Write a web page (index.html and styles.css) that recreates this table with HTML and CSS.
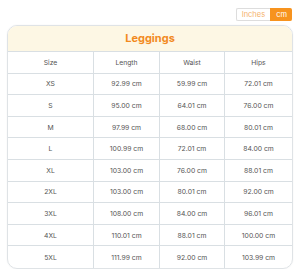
FILE: index.html
```html
<!DOCTYPE html>
<html lang="en">
<head>
    <meta charset="UTF-8">
    <title>Leggings size chart</title>
    <link rel="stylesheet" href="styles.css">
</head>
<body>
    <div class="chart">
        <div class="unit-toggle">
            <span class="unit">Inches</span>
            <span class="unit active">cm</span>
        </div>
        <div class="card">
            <div class="card-title">Leggings</div>
            <div class="grid">
                <div class="cell head">Size</div><div class="cell head">Length</div><div class="cell head">Waist</div><div class="cell head">Hips</div>
                <div class="cell">XS</div><div class="cell">92.99 cm</div><div class="cell">59.99 cm</div><div class="cell">72.01 cm</div>
                <div class="cell">S</div><div class="cell">95.00 cm</div><div class="cell">64.01 cm</div><div class="cell">76.00 cm</div>
                <div class="cell">M</div><div class="cell">97.99 cm</div><div class="cell">68.00 cm</div><div class="cell">80.01 cm</div>
                <div class="cell">L</div><div class="cell">100.99 cm</div><div class="cell">72.01 cm</div><div class="cell">84.00 cm</div>
                <div class="cell">XL</div><div class="cell">103.00 cm</div><div class="cell">76.00 cm</div><div class="cell">88.01 cm</div>
                <div class="cell">2XL</div><div class="cell">103.00 cm</div><div class="cell">80.01 cm</div><div class="cell">92.00 cm</div>
                <div class="cell">3XL</div><div class="cell">108.00 cm</div><div class="cell">84.00 cm</div><div class="cell">96.01 cm</div>
                <div class="cell">4XL</div><div class="cell">110.01 cm</div><div class="cell">88.01 cm</div><div class="cell">100.00 cm</div>
                <div class="cell last">5XL</div><div class="cell last">111.99 cm</div><div class="cell last">92.00 cm</div><div class="cell last">103.99 cm</div>
            </div>
        </div>
    </div>
</body>
</html>
```

FILE: styles.css
```css
* {
    margin: 0;
    padding: 0;
    box-sizing: border-box;
}

body {
    font-family: "Inter", "Open Sans", sans-serif;
    background: #fff;
    color: #555;
}

.chart {
    padding: 8px 7px 0 7px;
}

.unit-toggle {
    display: flex;
    justify-content: flex-end;
    margin-right: 1px;
}

.unit {
    font-size: 7.5px;
    line-height: 11px;
    padding: 0 5px;
    color: #f5b26b;
    border: 1px solid #ddd;
    border-right: none;
    border-radius: 2px 0 0 2px;
    background: #fff;
}

.unit.active {
    color: #fff;
    background: #f7931e;
    border-color: #f7931e;
    border-radius: 0 2px 2px 0;
}

.card {
    margin-top: 4px;
    border: 1px solid #dfe3e6;
    border-radius: 10px;
    overflow: hidden;
    box-shadow: 0 0 2px rgba(0, 0, 0, 0.06);
}

.card-title {
    height: 26px;
    background: #fdf7e4;
    color: #f28a1e;
    font-size: 11px;
    font-weight: 700;
    text-align: center;
    line-height: 25px;
    border-bottom: 1px solid #d9dfe3;
}

.grid {
    display: grid;
    grid-template-columns: 86px 66px 65px 1fr;
}

.cell {
    height: 21.6px;
    display: flex;
    align-items: center;
    justify-content: center;
    font-size: 6.8px;
    color: #555;
    border-bottom: 1px solid #d9dfe3;
    border-right: 1px solid #d9dfe3;
}

.cell:nth-child(4n) {
    border-right: none;
}

.cell.last {
    border-bottom: none;
}
```
